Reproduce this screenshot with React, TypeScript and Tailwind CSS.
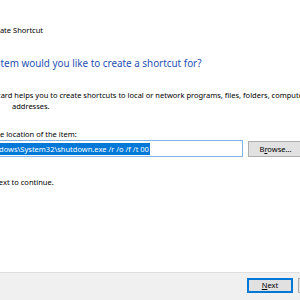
import React from "react";

export default function App() {
  const font = { fontFamily: '"Noto Sans", "Segoe UI", sans-serif' };
  return (
    <div
      className="w-[300px] h-[300px] overflow-hidden bg-white flex flex-col text-black"
      style={font}
    >
      <div className="flex-1 flex flex-col overflow-hidden">
        <div className="mt-[24px] h-[12px] leading-[12px] text-[7.5px] ml-[-12px] whitespace-nowrap">
          Create Shortcut
        </div>
        <div className="mt-[19px] h-[16px] leading-[16px] text-[9.9px] text-[#1e50b4] ml-[-29px] whitespace-nowrap">
          What item would you like to create a shortcut for?
        </div>
        <div className="mt-[19px] ml-[-27px] text-[7.5px] leading-[11px] whitespace-nowrap">
          <div>This wizard helps you to create shortcuts to local or network programs, files, folders, computers, or Internet</div>
          <div className="pl-[39px]">addresses.</div>
        </div>
        <div className="mt-[17px] ml-[-26px] h-[11px] text-[7.5px] leading-[11px] whitespace-nowrap">
          Type the location of the item:
        </div>
        <div className="mt-[0px] ml-[-27px] flex items-center gap-[5px]">
          <div className="w-[270px] h-[17px] border border-[#7eb4ea] bg-white flex items-center px-[1px] shrink-0">
            <span className="bg-[#0078d7] text-white text-[7.5px] leading-[12px] px-[1px] whitespace-nowrap">
              C:\Windows\System32\shutdown.exe /r /o /f /t 00
            </span>
          </div>
          <div className="w-[55px] h-[16px] shrink-0 border border-[#adadad] bg-[#e1e1e1] flex items-center justify-center text-[7.5px] leading-[12px]">
            <span>
              B<span className="underline">r</span>owse...
            </span>
          </div>
        </div>
        <div className="mt-[20px] ml-[-25px] h-[11px] text-[7.5px] leading-[11px] whitespace-nowrap">
          Click Next to continue.
        </div>
      </div>
      <div className="h-[28px] shrink-0 border-t border-[#dfdfdf] bg-[#f0f0f0] flex items-start pt-[5px] pl-[247px] gap-[5px]">
        <div className="w-[46px] h-[15px] shrink-0 border-2 border-[#0078d7] bg-[#e1e1e1] flex items-center justify-center text-[7.5px] leading-[11px]">
          <span>
            <span className="underline">N</span>ext
          </span>
        </div>
        <div className="w-[46px] h-[15px] shrink-0 border border-[#adadad] bg-[#e1e1e1]" />
      </div>
    </div>
  );
}
